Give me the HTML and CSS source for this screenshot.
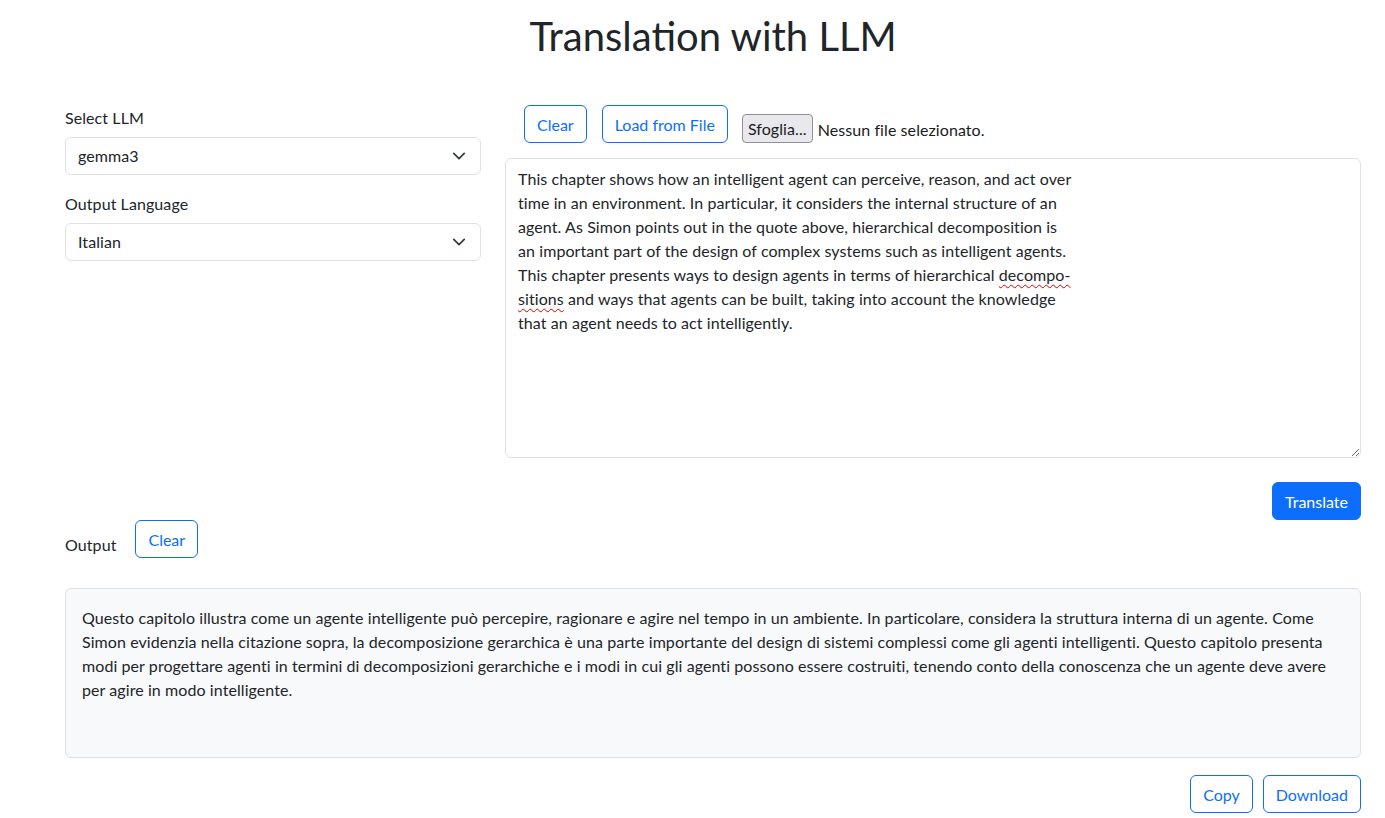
FILE: index.html
```html
<!DOCTYPE html>
<html lang="en">
<head>
<meta charset="utf-8">
<title>Translation with LLM</title>
<link rel="stylesheet" href="styles.css">
</head>
<body>
<div class="page">
  <h1 class="title">Translation with LLM</h1>

  <div class="main">
    <div class="left">
      <label class="form-label">Select LLM</label>
      <div class="select">
        <span>gemma3</span>
        <svg class="chev" width="14" height="14" viewBox="0 0 16 16"><path d="m2 5 6 6 6-6" fill="none" stroke="#343a40" stroke-width="2" stroke-linecap="round" stroke-linejoin="round"/></svg>
      </div>
      <label class="form-label mt">Output Language</label>
      <div class="select">
        <span>Italian</span>
        <svg class="chev" width="14" height="14" viewBox="0 0 16 16"><path d="m2 5 6 6 6-6" fill="none" stroke="#343a40" stroke-width="2" stroke-linecap="round" stroke-linejoin="round"/></svg>
      </div>
    </div>

    <div class="right">
      <div class="toolbar">
        <button class="btn btn-outline">Clear</button>
        <button class="btn btn-outline">Load from File</button>
        <div class="file">
          <span class="file-btn">Sfoglia...</span>
          <span class="file-text">Nessun file selezionato.</span>
        </div>
      </div>
      <div class="textarea">This chapter shows how an intelligent agent can perceive, reason, and act over
time in an environment. In particular, it considers the internal structure of an
agent. As Simon points out in the quote above, hierarchical decomposition is
an important part of the design of complex systems such as intelligent agents.
This chapter presents ways to design agents in terms of hierarchical <span class="spell">decompo-</span>
<span class="spell">sitions</span> and ways that agents can be built, taking into account the knowledge
that an agent needs to act intelligently.</div>
    </div>
  </div>

  <div class="translate-row">
    <button class="btn btn-primary">Translate</button>
  </div>

  <div class="output-row">
    <span class="output-label">Output</span>
    <button class="btn btn-outline">Clear</button>
  </div>

  <div class="output-box">Questo capitolo illustra come un agente intelligente può percepire, ragionare e agire nel tempo in un ambiente. In particolare, considera la struttura interna di un agente. Come Simon evidenzia nella citazione sopra, la decomposizione gerarchica è una parte importante del design di sistemi complessi come gli agenti intelligenti. Questo capitolo presenta modi per progettare agenti in termini di decomposizioni gerarchiche e i modi in cui gli agenti possono essere costruiti, tenendo conto della conoscenza che un agente deve avere per agire in modo intelligente.</div>

  <div class="bottom-row">
    <button class="btn btn-outline">Copy</button>
    <button class="btn btn-outline">Download</button>
  </div>
</div>
</body>
</html>
```

FILE: styles.css
```css
* { box-sizing: border-box; }

body {
  margin: 0;
  font-family: Lato, "Noto Sans", sans-serif;
  font-size: 16px;
  line-height: 24px;
  letter-spacing: 0.08px;
  color: #212529;
  background: #fff;
}

.page {
  padding: 0 24px 0 65px;
}

.title {
  margin: 12px 0 0;
  font-size: 40px;
  font-weight: 400;
  line-height: 48px;
  letter-spacing: 0;
  text-align: center;
  color: #212529;
}

.main {
  display: grid;
  grid-template-columns: 416px 1fr;
  column-gap: 24px;
  margin-top: 45px;
}

.left {
  display: flex;
  flex-direction: column;
  padding-top: 1px;
}

.form-label {
  display: block;
  margin-bottom: 7px;
}

.form-label.mt { margin-top: 17px; }

.select {
  height: 38px;
  border: 1px solid #dee2e6;
  border-radius: 6px;
  padding: 6px 12px;
  display: flex;
  align-items: center;
  justify-content: space-between;
  background: #fff;
}

.chev { margin-right: 2px; }

.toolbar {
  display: flex;
  align-items: flex-end;
  gap: 15px;
  padding-left: 19px;
  height: 38px;
}

.btn {
  font-family: inherit;
  font-size: 16px;
  line-height: 24px;
  letter-spacing: 0;
  padding: 7px 12px 5px;
  border-radius: 6px;
  border: 1px solid #0d6efd;
  background: #fff;
  color: #0d6efd;
  height: 38px;
  cursor: pointer;
}

.btn-primary {
  background: #0d6efd;
  color: #fff;
}

.file {
  display: flex;
  align-items: center;
  gap: 5px;
  margin-left: -1px;
}

.file-btn {
  display: inline-block;
  height: 29px;
  line-height: 27px;
  padding: 0 5px;
  background: #e9e9ed;
  border: 1px solid #8f8f9d;
  border-radius: 4px;
  color: #1b1b1b;
}

.file-text {
  color: #1b1b1b;
  padding-top: 2px;
}

.textarea {
  margin-top: 15px;
  height: 300px;
  border: 1px solid #dee2e6;
  border-radius: 6px;
  padding: 8px 12px;
  white-space: pre-line;
  overflow: auto;
  resize: vertical;
  background: #fff;
}

.spell {
  text-decoration: underline wavy #d00;
  text-decoration-thickness: 1px;
  text-underline-offset: 3px;
}

.translate-row {
  display: flex;
  justify-content: flex-end;
  margin-top: 24px;
}

.output-row {
  display: flex;
  align-items: flex-end;
  gap: 19px;
}

.output-label {
  line-height: 24px;
  padding-bottom: 1px;
}

.output-box {
  margin-top: 30px;
  height: 170px;
  border: 1px solid #dee2e6;
  border-radius: 6px;
  background: #f8f9fa;
  padding: 17px 16px;
}

.bottom-row {
  display: flex;
  justify-content: flex-end;
  gap: 10px;
  margin-top: 17px;
}
```
